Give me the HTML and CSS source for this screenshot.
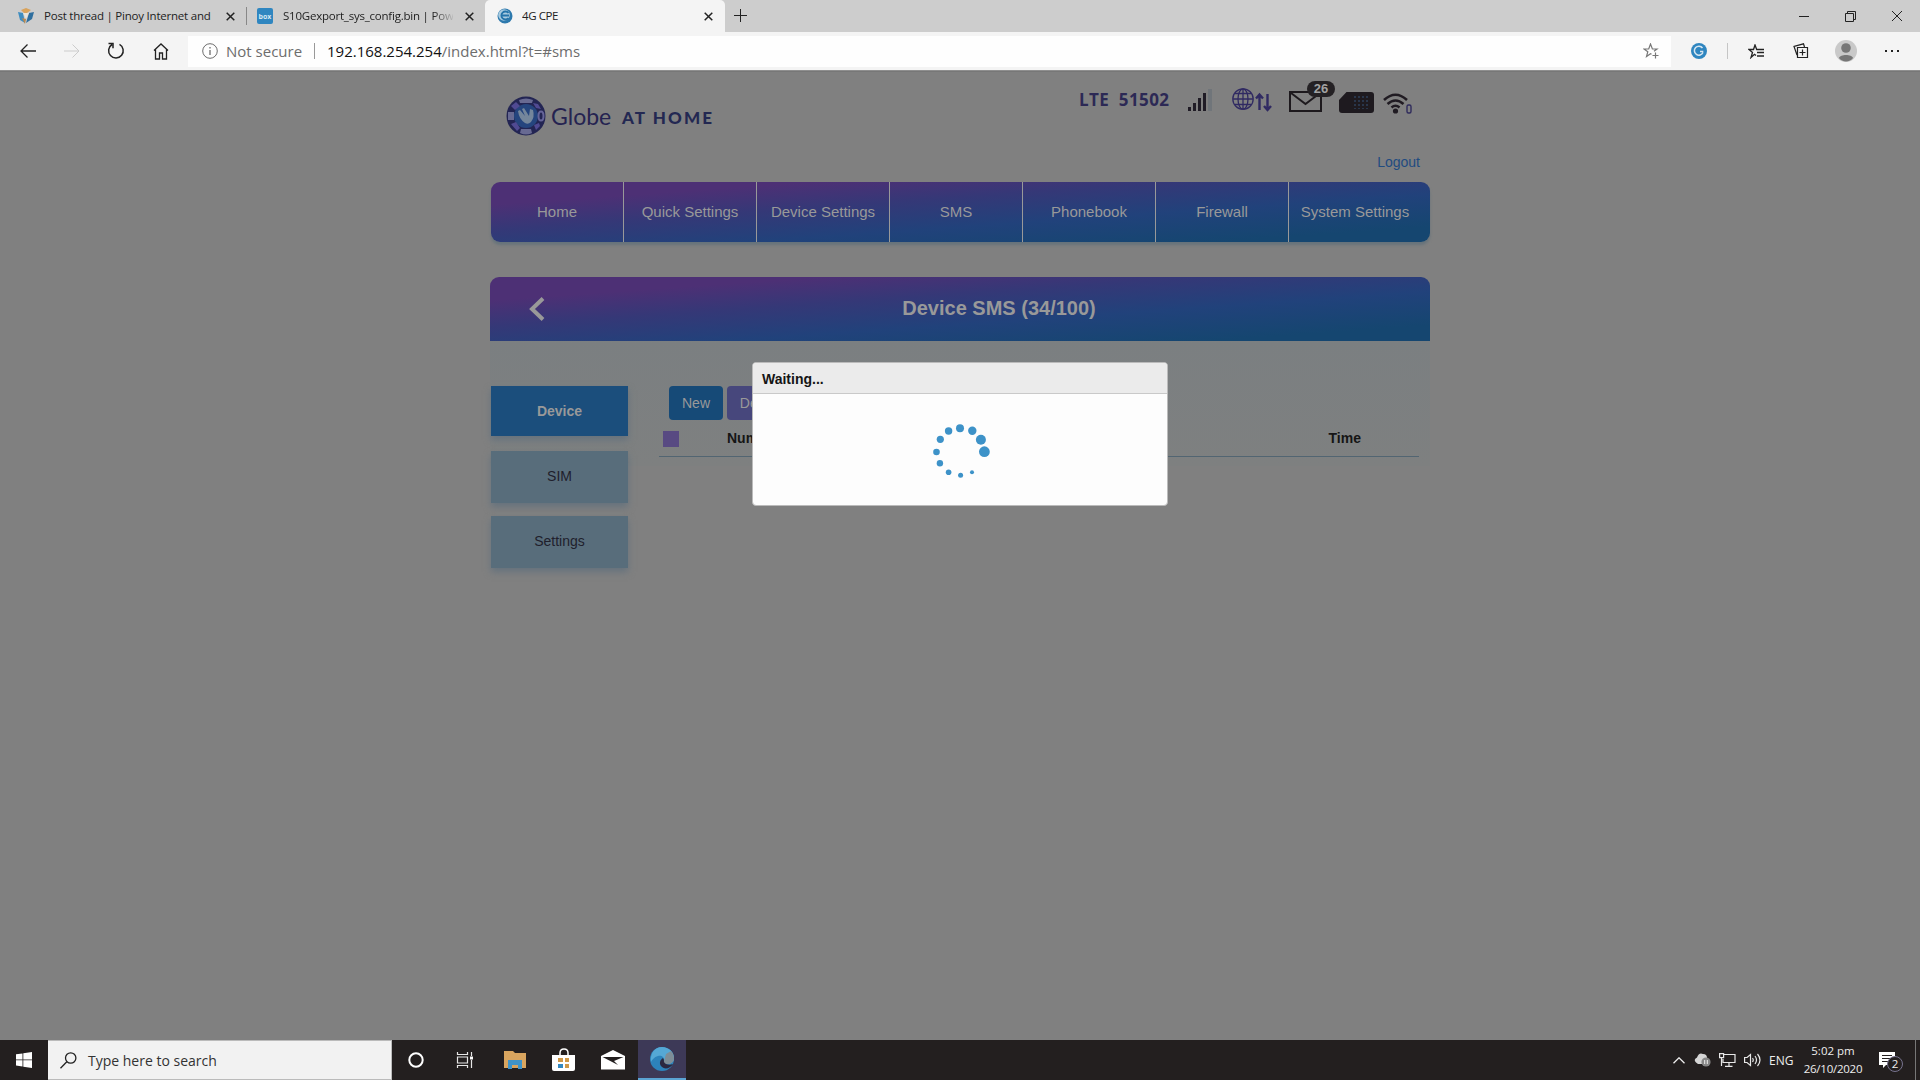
FILE: index.html
```html
<!DOCTYPE html>
<html lang="en">

<head>
    <meta charset="utf-8">
    <title>4G CPE</title>
    <link rel="stylesheet" href="styles.css">
</head>

<body>
    <!-- browser tabs -->
    <div class="tabs">
        <div class="tab tab1">
            <svg width="16" height="16" viewBox="0 0 16 16"><path d="M0 4l5 1 2 10-5-3z" fill="#3f8dc0"/><path d="M16 4l-5 1-3 10 6-4z" fill="#2f6f9f"/><path d="M3 2l5-2 5 2-4 3H6z" fill="#d9a35c"/><path d="M5 5l6 0-3 6z" fill="#e8e4da"/><path d="M4 10l4 1-1 5z" fill="#b98850"/></svg>
            <span class="tabText">Post thread | Pinoy Internet and</span>
            <svg class="x" width="9" height="9" viewBox="0 0 9 9"><path d="M.7.7l7.6 7.6M8.3.7L.7 8.3"/></svg>
        </div>
        <div class="tab tab2">
            <svg width="16" height="16" viewBox="0 0 16 16"><rect width="16" height="16" rx="2" fill="#2f86c0"/><text x="8" y="11" text-anchor="middle" class="boxText">box</text></svg>
            <span class="tabText fade">S10Gexport_sys_config.bin | Pow</span>
            <svg class="x" width="9" height="9" viewBox="0 0 9 9"><path d="M.7.7l7.6 7.6M8.3.7L.7 8.3"/></svg>
        </div>
        <div class="tab active">
            <svg width="16" height="16" viewBox="0 0 16 16"><circle cx="8" cy="8" r="7.500" fill="#2d79ad"/><circle cx="7" cy="7" r="5.800" fill="#a9cbe0"/><path d="M11.500 5A4 4 0 1 0 11.500 10M5 7.500h7" fill="none" stroke="#2474aa" stroke-width="1.800"/></svg>
            <span class="tabText">4G CPE</span>
            <svg class="x" width="9" height="9" viewBox="0 0 9 9"><path d="M.7.7l7.6 7.6M8.3.7L.7 8.3"/></svg>
        </div>
        <svg class="plus line" width="13" height="13" viewBox="0 0 13 13"><path d="M6.500 0v13M0 6.500h13"/></svg>
        <div class="winButtons">
            <svg class="line" width="10" height="10" viewBox="0 0 10 10"><path d="M0 5.500h10"/></svg>
            <svg class="line" width="11" height="11" viewBox="0 0 11 11"><path d="M.5 2.500h8v8h-8zM2.500 2.500v-2h8v8h-2"/></svg>
            <svg class="line" width="10" height="10" viewBox="0 0 10 10"><path d="M0 0l10 10M10 0L0 10"/></svg>
        </div>
    </div>

    <!-- address bar -->
    <div class="toolbar">
        <div class="navIcons">
            <svg class="line" width="16" height="14" viewBox="0 0 16 14"><path d="M16 7H1M7.500.5L1 7l6.500 6.500" stroke-width="1.300"/></svg>
            <svg class="line off" width="16" height="14" viewBox="0 0 16 14"><path d="M0 7h15M8.500.5L15 7l-6.500 6.500"/></svg>
            <svg class="line" width="18" height="18" viewBox="0 0 18 18"><path d="M5 2.500A7.300 7.300 0 1 0 12.500 2.300M1.500 1.500H6v4.800" stroke-width="1.500"/></svg>
            <svg class="line" width="16" height="17" viewBox="0 0 16 17"><path d="M1 7.500L8 1l7 6.500M2.500 6.500v9.500h4v-6h3v6h4V6.500" stroke-width="1.300"/></svg>
        </div>
        <div class="address">
            <svg width="16" height="16" viewBox="0 0 16 16" fill="none" stroke="#6d6d6d"><circle cx="8" cy="8" r="7.300"/><path d="M8 7v5M8 4v1.500" stroke-width="1.300"/></svg>
            <span class="notSecure">Not secure</span>
            <span class="divider"></span>
            <span class="url"><b>192.168.254.254</b>/index.html?t=#sms</span>
            <svg class="star" width="17" height="17" viewBox="0 0 17 17" fill="none" stroke="#777"><path d="M8.500 11.300L7.500 10.700 3.500 13.500l1.300-4.800L1 6h4.700L7.500 1l1.900 5H14L11 8.300M12.500 9.500v6M9.500 12.500h6" stroke-width="1.200"/></svg>
        </div>
        <div class="tools">
            <svg width="16" height="16" viewBox="0 0 16 16"><circle cx="8" cy="8" r="8" fill="#2f86c0"/><path d="M11.500 5A4.500 4.500 0 1 0 12 9.500M12.300 8.500H9" fill="none" stroke="#d8e7f1" stroke-width="1.500"/></svg>
            <span class="divider"></span>
            <svg class="line fav" width="17" height="15" viewBox="0 0 17 15"><path d="M8 11.500L6.500 10.300 3 13.500 4.500 8.500 1 5.500h4.500L7 1l1.700 4.500H16M9 8.500h7M9 12h7" stroke-width="1.300"/></svg>
            <svg class="line coll" width="16" height="16" viewBox="0 0 16 16"><path d="M4.500 4.500h10v10h-10zM9.500 6.500v6M6.500 9.500h6M4 12L1 3.500 10.500.8 11.500 4" stroke-width="1.200"/></svg>
            <svg class="avatar" width="22" height="22" viewBox="0 0 22 22"><circle cx="11" cy="11" r="11" fill="#c9c9c9"/><circle cx="11" cy="8" r="4.800" fill="#767676"/><path d="M4 18c1-4 13-4 14 0-3 4.500-11 4.500-14 0z" fill="#767676"/></svg>
            <svg class="dots" width="16" height="4" viewBox="0 0 16 4" fill="#222"><rect x="1" y="1" width="2" height="2"/><rect x="7" y="1" width="2" height="2"/><rect x="13" y="1" width="2" height="2"/></svg>
        </div>
    </div>

    <!-- router page -->
    <div class="page">
        <div class="container">
            <div class="header">
                <div class="logo">
                    <svg width="40" height="40" viewBox="0 0 40 40">
                        <circle cx="20" cy="20" r="19.500" fill="#232553"/>
                        <circle cx="20" cy="20" r="12" fill="#25457e"/>
                        <path d="M13 4q7-3 14 0l-1 3H14zM2 16h6v8H2zM15 33h10l1 4q-6 3-12 0z" fill="#686a92"/>
                        <path d="M5 10l5-4 4 4-5 4zM27 7l5 1 3 5-5-1zM5 28l5-2 4 6-3 3zM28 29l5-2 1 3-4 4z" fill="#504a92"/>
                        <ellipse cx="35" cy="20" rx="2.500" ry="4.500" fill="none" stroke="#66659a" stroke-width="2"/>
                        <path d="M12 15l2-1 5 6-3-7 2-1 5 8 1-7 3 1q2 7-2 12-3 3-6 1-6-4-7-12z" fill="#74869b"/>
                    </svg>
                    <span class="globe">Globe</span>
                    <span class="atHome">AT HOME</span>
                </div>
                <div class="status">
                    <span class="network">LTE&nbsp; 51502</span>
                    <svg class="signal" width="26" height="22" viewBox="0 0 26 22"><path d="M0 18h3v4H0zM5 14h3v8H5zM10 9h3v13h-3zM15 4h3v18h-3z" fill="#201c26"/><path d="M20 0h4v22h-4z" fill="#70757a"/></svg>
                    <svg class="world" width="41" height="24" viewBox="0 0 41 24" fill="none" stroke="#302a62" stroke-width="1.300"><circle cx="11" cy="11" r="10.200"/><ellipse cx="11" cy="11" rx="5" ry="10.200"/><path d="M11 1v20M1 11h20M3 5.500h16M3 16.500h16"/><path d="M27.500 22V8M24 10.500l3.500-4 3.500 4M35.500 6v14M32 18l3.500 4 3.500-4" stroke-width="2.400"/></svg>
                    <div class="mail">
                        <svg width="33" height="21" viewBox="0 0 33 21" fill="none" stroke="#1d191d" stroke-width="2"><rect x="1" y="1" width="31" height="19"/><path d="M2 2l14.500 11L31 2"/></svg>
                        <span class="badge">26</span>
                    </div>
                    <svg class="sim" width="35" height="21" viewBox="0 0 35 21"><path d="M7.500 0H32q3 0 3 3v15q0 3-3 3H3q-3 0-3-3V8z" fill="#1e1a1f"/><path d="M16 4v13M20 4v13M24 4v13M28 4v13" stroke="#29364b" stroke-dasharray="2 2" stroke-width="2"/></svg>
                    <svg class="wifi" width="30" height="21" viewBox="0 0 30 21" fill="none" stroke="#201b22" stroke-width="2.600"><path d="M1 7q11.500-10.500 23 0M4.500 11q8-7 16 0M8.500 14.500q4-3.500 8 0"/><circle cx="12.500" cy="18" r="2.600" fill="#201b22" stroke="none"/><rect x="24" y="12" width="4" height="8" rx="1.500" stroke="#2f2b5c" stroke-width="1.400"/></svg>
                </div>
                <a class="logout">Logout</a>
            </div>

            <div class="menu">
                <div>Home</div>
                <div>Quick Settings</div>
                <div>Device Settings</div>
                <div>SMS</div>
                <div>Phonebook</div>
                <div>Firewall</div>
                <div>System Settings</div>
            </div>

            <div class="title">
                <svg width="16" height="24" viewBox="0 0 16 24"><path d="M14 1.500L3 12l11 10.500" fill="none" stroke="#999" stroke-width="4"/></svg>
                <h3>Device SMS (34/100)</h3>
            </div>

            <div class="content">
                <div class="side">
                    <div class="sideItem selected">Device</div>
                    <div class="sideItem">SIM</div>
                    <div class="sideItem">Settings</div>
                </div>
                <div class="messages">
                    <div class="buttons">
                        <span class="btn">New</span>
                        <span class="btn delete">Delete</span>
                    </div>
                    <div class="listHead">
                        <span class="check"></span>
                        <span class="number">Number</span>
                        <span class="time">Time</span>
                    </div>
                </div>
            </div>
        </div>

        <div class="dialog">
            <div class="dialogTitle">Waiting...</div>
            <div class="dialogBody">
                <svg width="60" height="60" viewBox="0 0 60 60" fill="#3d92c8">
                    <circle cx="30" cy="7.300" r="4"/>
                    <circle cx="42.300" cy="9.700" r="4.200"/>
                    <circle cx="50.900" cy="18.700" r="5"/>
                    <circle cx="54.400" cy="30.700" r="5.400"/>
                    <circle cx="42" cy="51.300" r="2"/>
                    <circle cx="30.600" cy="54.300" r="2.500"/>
                    <circle cx="18.600" cy="51.300" r="2.800"/>
                    <circle cx="9.900" cy="42.300" r="3.200"/>
                    <circle cx="6.500" cy="31" r="3.300"/>
                    <circle cx="10.300" cy="18.300" r="3.600"/>
                    <circle cx="18.600" cy="10" r="3.700"/>
                </svg>
            </div>
        </div>
    </div>

    <!-- windows taskbar -->
    <div class="taskbar">
        <div class="start">
            <svg width="16" height="16" viewBox="0 0 16 16" fill="#fff"><path d="M0 2.300l6.500-.9v6.100H0zM7.300 1.200L16 0v7.500H7.300zM0 8.300h6.500v6.200L0 13.600zM7.300 8.300H16V16l-8.700-1.300z"/></svg>
        </div>
        <div class="search">
            <svg width="17" height="17" viewBox="0 0 17 17" fill="none" stroke="#222" stroke-width="1.300"><circle cx="10.700" cy="6" r="5.200"/><path d="M6.800 9.800L.5 16.300"/></svg>
            <span>Type here to search</span>
        </div>
        <div class="apps">
            <div><svg width="16" height="16" viewBox="0 0 16 16"><circle cx="8" cy="8" r="6.700" fill="none" stroke="#fff" stroke-width="2"/></svg></div>
            <div><svg width="18" height="16" viewBox="0 0 18 16" fill="none" stroke="#e6e6e6" stroke-width="1.200"><path d="M1.500 0v2.500h10V0M1.500 5h10v6h-10zM1.500 16v-2.500h10V16M15.500 0v4M15.500 8v8"/><path d="M14 4.500h3v3h-3z" fill="#fff" stroke="none"/></svg></div>
            <div><svg width="22" height="18" viewBox="0 0 22 18"><path d="M0 0h9l2 2h11v15H0z" fill="#d9a55f"/><path d="M4 9h14v9h-4v-4H8v4H4z" fill="#3f93c8"/></svg></div>
            <div><svg width="24" height="24" viewBox="0 0 24 24"><path d="M8 8V5q0-4 4-4t4 4v3" fill="none" stroke="#fff" stroke-width="1.500"/><path d="M0 7h23v14q0 2-2 2H2q-2 0-2-2z" fill="#fff"/><path d="M6 10h5v4H6zM13 10h4v4h-4zM13 16h4v4h-4z" fill="#cf9848"/><path d="M6 16h5v4H6z" fill="#3289c2"/></svg></div>
            <div><svg width="24" height="20" viewBox="0 0 24 20"><path d="M0 6l12-6 12 6v13.500H0z" fill="#fff"/><path d="M1.500 7h21L13 11l4 4z" fill="#231f1f"/></svg></div>
            <div class="edge"><svg width="24" height="24" viewBox="0 0 24 24"><circle cx="12" cy="12" r="12" fill="#2d83bb"/><path d="M12 0c7 0 12 5 12 11 0 4-3 6-7 6-2 0-4-1-3-3 1-4-3-6-6-5-4 1-6 4-7 6C0 7 4 0 12 0z" fill="#55a8d5"/><path d="M24 11c0 4-3 6-7 6-2 0-4-1-3-3l2-7 5-3q3 3 3 7z" fill="#7e8d96"/><path d="M14 13c-1 3 3 6 9 4-3 5-9 6-12 2-2-3-1-6 2-8z" fill="#2b2840"/></svg></div>
        </div>
        <div class="tray">
            <svg width="12" height="7" viewBox="0 0 12 7" fill="none" stroke="#eee" stroke-width="1.300"><path d="M.5 6.300L6 .8l5.500 5.500"/></svg>
            <svg width="17" height="14" viewBox="0 0 17 14"><path d="M2 9.500q-3-3 1-5Q5-1 9 1q4 0 4 4l2 3-4 3H4z" fill="#d5d5d5"/><circle cx="12" cy="9" r="4.600" fill="#868686"/><path d="M10.700 7v4M13.300 7v4" stroke="#eee"/></svg>
            <svg width="17" height="14" viewBox="0 0 17 14" fill="none" stroke="#e8e8e8" stroke-width="1.200"><path d="M5 1.500h11v8H4V6M.6.6h4v4h-4zM2.500 5v8M10 10v3M6 13.300h7.500"/></svg>
            <svg width="17" height="14" viewBox="0 0 17 14" fill="none" stroke="#e8e8e8" stroke-width="1.200"><path d="M.6 4.500h2.500L6.500 1.500v11L3 9.500H.6zM8.500 5q1.500 2 0 4M11 3q3 4 0 8M13.500 1q5 6 0 12"/></svg>
            <span class="lang">ENG</span>
            <div class="clock"><span>5:02 pm</span><span class="date">26/10/2020</span></div>
            <div class="notes">
                <svg width="16" height="16" viewBox="0 0 16 16"><path d="M0 0h16v13H7l-3 3v-3H0z" fill="#fff"/><path d="M3 3.500h10M3 6.500h10M3 9.500h6" stroke="#231f1f"/></svg>
                <span>2</span>
            </div>
            <span class="desktopEdge"></span>
        </div>
    </div>
</body>

</html>
```

FILE: styles.css
```css
* {
    box-sizing: border-box;
}

body {
    margin: 0;
    width: 1920px;
    height: 1080px;
    overflow: hidden;
    display: flex;
    flex-direction: column;
    font-family: "Open Sans", "Noto Sans", sans-serif;
    background: #808080;
}

svg {
    display: block;
    flex: none;
}

.line {
    fill: none;
    stroke: #222;
}

/* tabs */
.tabs {
    display: flex;
    align-items: center;
    height: 32px;
    background: #cdcdcd;
}

.tab {
    display: flex;
    align-items: center;
    height: 32px;
    width: 240px;
    padding: 0 12px 0 12px;
    font-size: 11.5px;
    color: #222;
}

.tab1 {
    width: 247px;
    padding-left: 18px;
    position: relative;
}

.tab1::after {
    content: "";
    position: absolute;
    right: 0;
    top: 7px;
    width: 1px;
    height: 18px;
    background: #888;
}

.tab2 {
    width: 238px;
    padding-left: 10px;
    padding-right: 11px;
}

.active {
    background: #f4f4f4;
    border-radius: 5px 5px 0 0;
}

.tabText {
    margin-left: 10px;
    width: 169px;
    overflow: hidden;
    white-space: nowrap;
    letter-spacing: -0.22px;
    padding-bottom: 1px;
}

.fade {
    width: 170px;
    -webkit-mask-image: linear-gradient(90deg, #000 150px, transparent 172px);
}

.active .tabText {
    width: 180px;
    margin-left: 9px;
    letter-spacing: -0.4px;
}

.x {
    fill: none;
    stroke: #222;
    stroke-width: 1.5;
    margin-left: auto;
}

.boxText {
    font: bold 7px "Open Sans", sans-serif;
    fill: #d5e6f2;
}

.plus {
    margin-left: 9px;
    margin-bottom: 1px;
}

.winButtons {
    display: flex;
    align-items: center;
    gap: 36px;
    margin-left: auto;
    margin-right: 18px;
    height: 28px;
}

/* toolbar */
.toolbar {
    display: flex;
    align-items: center;
    height: 39px;
    background: #f4f4f4;
    border-bottom: 1px solid #8f8f8f;
}

.navIcons {
    display: flex;
    align-items: center;
    gap: 27.500px;
    width: 188px;
    padding-left: 20px;
}

.off {
    stroke: #ccc;
}

.address {
    display: flex;
    align-items: center;
    width: 1483px;
    height: 31px;
    padding: 0 11px 0 14px;
    background: #fefefe;
    font-size: 15px;
    color: #6d6d6d;
}

.notSecure {
    width: 88px;
    margin-left: 8px;
    white-space: nowrap;
}

.divider {
    width: 1px;
    height: 16px;
    background: #999;
}

.url {
    margin-left: 12px;
    white-space: nowrap;
}

.url b {
    font-weight: 400;
    color: #111;
}

.star {
    margin-left: auto;
}

.tools {
    display: flex;
    align-items: center;
    width: 249px;
    padding-left: 20px;
}

.tools .divider {
    margin-left: 20px;
    background: #c5c5c5;
}

.fav {
    margin-left: 20px;
}

.coll {
    margin-left: 28px;
}

.avatar {
    margin-left: 26px;
}

.dots {
    margin-left: 27px;
}

/* page */
.page {
    position: relative;
    height: 969px;
    background: #808080;
    font-family: "Liberation Sans", Arial, sans-serif;
    border-top: 1px solid #777;
}

.container {
    width: 940px;
    margin: 0 auto;
}

.header {
    display: grid;
    grid-template-columns: 1fr auto;
    grid-template-rows: 70px 40px;
    height: 110px;
}

.logo {
    display: flex;
    align-items: center;
    padding: 19px 0 0 16px;
    height: 69px;
    color: #252351;
}

.globe {
    margin-left: 5px;
    font: 23px Lato, sans-serif;
    width: 71px;
}

.atHome {
    font: 900 17px Lato, sans-serif;
    letter-spacing: 2.1px;
    color: #232852;
    padding-top: 3px;
}

.status {
    display: flex;
    align-items: flex-start;
    padding-right: 17px;
}

.network {
    font: bold 17px "Open Sans", sans-serif;
    letter-spacing: 0.4px;
    color: #2c2955;
    width: 109px;
    margin-top: 16px;
    white-space: nowrap;
}

.signal {
    margin-top: 17px;
}

.world {
    margin: 16px 0 0 18px;
}

.mail {
    position: relative;
    margin: 19px 0 0 16px;
}

.badge {
    position: absolute;
    left: 18px;
    top: -10px;
    width: 28px;
    height: 16px;
    border-radius: 8px;
    background: #242124;
    color: #a2a2a2;
    font: bold 13px/15px "Liberation Sans", sans-serif;
    text-align: center;
}

.sim {
    margin: 20px 0 0 17px;
}

.wifi {
    margin: 21px 0 0 9px;
}

.logout {
    grid-column: 2;
    justify-self: end;
    margin-right: 10px;
    padding-top: 12px;
    font-size: 14px;
    color: #1f4b80;
}

.menu {
    display: flex;
    height: 60px;
    margin-left: 1px;
    border-radius: 9px;
    overflow: hidden;
    background: linear-gradient(176deg, #4d3075 18%, #353877 38%, #21427b 62%, #154670 88%);
    box-shadow: 0 3px 3px #66737b;
    color: #999;
    font-size: 15px;
    line-height: 59px;
    text-align: center;
}

.menu div {
    width: 133px;
    border-right: 1px solid #999;
}

.menu div:last-child {
    flex: 1;
    border: 0;
    padding-right: 9px;
}

.title {
    display: flex;
    align-items: center;
    height: 64px;
    margin-top: 35px;
    padding-left: 39px;
    border-radius: 9px 9px 0 0;
    background: linear-gradient(176deg, #4d3075 18%, #353877 38%, #21427b 62%, #154670 88%);
    color: #999;
}

.title h3 {
    flex: 1;
    margin: 0;
    padding: 0 0 2px 23px;
    text-align: center;
    font-size: 20px;
}

.content {
    display: flex;
    height: 125px;
    padding: 45px 0 0 1px;
    background: linear-gradient(#7b7f81, #7e8080);
}

.side {
    width: 137px;
    display: flex;
    flex-direction: column;
    gap: 13px;
    flex: none;
    font-size: 14px;
    text-align: center;
    color: #20202c;
}

.sideItem {
    height: 52px;
    line-height: 50px;
    flex: none;
    background: #586d7b;
    box-shadow: 0 4px 7px #65727d;
}

.selected {
    height: 50px;
    margin-bottom: 2px;
    background: #1b4e7c;
    color: #999;
    font-weight: bold;
}

.messages {
    margin-left: 31px;
    width: 760px;
}

.buttons {
    display: flex;
    gap: 4px;
    padding-left: 10px;
    font-size: 14px;
}

.btn {
    width: 54px;
    height: 34px;
    line-height: 34px;
    border-radius: 4px;
    background: #164a77;
    color: #999;
    text-align: center;
}

.delete {
    width: 66px;
    background: #47477c;
}

.listHead {
    display: flex;
    align-items: center;
    height: 37px;
    padding: 0 0 1px 4px;
    border-bottom: 1px solid #526572;
    font-weight: bold;
    font-size: 14px;
    color: #151515;
}

.check {
    width: 16px;
    height: 16px;
    margin-top: 2px;
    background: #584a82;
}

.number {
    margin-left: 48px;
}

.time {
    margin: 0 58px 0 auto;
}

.dialog {
    position: absolute;
    left: 752px;
    top: 290px;
    width: 416px;
    height: 144px;
    border: 1px solid #bbb;
    border-radius: 4px;
    background: #fdfdfd;
    overflow: hidden;
}

.dialogTitle {
    height: 31px;
    padding-left: 9px;
    line-height: 32px;
    background: #ebebeb;
    border-bottom: 1px solid #c9c9c9;
    font-size: 14px;
    font-weight: bold;
    color: #151515;
}

.dialogBody {
    padding: 27px 0 0 177px;
}

/* taskbar */
.taskbar {
    display: flex;
    height: 40px;
    background: #231f1f;
    color: #eee;
}

.start {
    display: flex;
    align-items: center;
    width: 48px;
    padding-left: 16px;
}

.search {
    display: flex;
    align-items: center;
    gap: 11px;
    width: 344px;
    padding-left: 12px;
    background: #f2f2f2;
    border: 1px solid #bbb;
    border-left: 0;
    color: #333;
    font-size: 14px;
}

.apps {
    display: flex;
}

.apps div {
    display: flex;
    align-items: center;
    justify-content: center;
    width: 49px;
}

.apps div:nth-child(-n+2) {
    padding-right: 2px;
}

.apps .edge {
    width: 48px;
    margin-left: 1px;
    background: #3d3957;
    border-bottom: 2px solid #5ba4d3;
}

.tray {
    display: flex;
    align-items: center;
    gap: 8px;
    margin-left: auto;
    font-size: 11.5px;
}

.tray svg:first-child {
    margin-right: 1px;
}

.lang {
    width: 23px;
    font-size: 12px;
}

.clock {
    display: flex;
    flex-direction: column;
    align-items: center;
    width: 66px;
    line-height: 18px;
}

.date {
    letter-spacing: -0.25px;
}

.notes {
    position: relative;
    margin-left: 5px;
}

.notes span {
    position: absolute;
    left: 8px;
    top: 4px;
    width: 16px;
    height: 16px;
    border: 1px solid #77738f;
    border-radius: 50%;
    background: #231f1f;
    line-height: 14px;
    text-align: center;
}

.desktopEdge {
    width: 5px;
    height: 40px;
    margin-left: 11px;
    border-left: 1px solid #777;
}
```
